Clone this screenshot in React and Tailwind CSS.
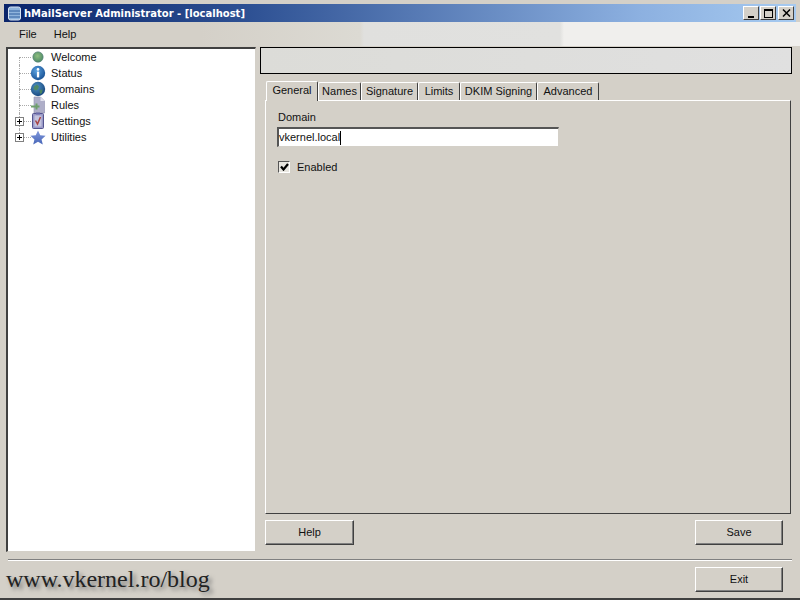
import React from "react";

const bevelBtn =
  "flex items-center justify-center h-[25px] bg-[#d4d0c8] border border-t-white border-l-white border-r-[#404040] border-b-[#404040] shadow-[inset_-1px_-1px_0_#808080] text-[11px] text-[#111]";

const Glyph = ({ name }) => {
  if (name === "welcome") {
    return (
      <svg width="16" height="16" viewBox="0 0 16 16">
        <defs>
          <radialGradient id="welcomeG" cx="0.45" cy="0.4" r="0.6">
            <stop offset="0" stopColor="#8fbf80" />
            <stop offset="1" stopColor="#4f8a68" />
          </radialGradient>
        </defs>
        <circle cx="8" cy="8" r="5.2" fill="url(#welcomeG)" stroke="#56807a" strokeWidth="0.6" />
      </svg>
    );
  }
  if (name === "status") {
    return (
      <svg width="16" height="16" viewBox="0 0 16 16">
        <defs>
          <radialGradient id="statusG" cx="0.4" cy="0.35" r="0.7">
            <stop offset="0" stopColor="#5aa2e0" />
            <stop offset="1" stopColor="#174f92" />
          </radialGradient>
        </defs>
        <circle cx="8" cy="8" r="7.2" fill="url(#statusG)" />
        <circle cx="8" cy="4.4" r="1.3" fill="#fff" />
        <rect x="6.9" y="6.6" width="2.3" height="5.8" fill="#fff" />
      </svg>
    );
  }
  if (name === "domains") {
    return (
      <svg width="16" height="16" viewBox="0 0 16 16">
        <defs>
          <radialGradient id="domainsG" cx="0.4" cy="0.35" r="0.75">
            <stop offset="0" stopColor="#4f93c4" />
            <stop offset="1" stopColor="#123f78" />
          </radialGradient>
        </defs>
        <circle cx="8" cy="8" r="7.2" fill="url(#domainsG)" />
        <path d="M4 5.5 7 3.5 9 5.5 8 8.5 5.5 9.5 3.5 8Z" fill="#4f8a68" />
        <path d="M9.5 9 12.5 8.5 12 12 10 13Z" fill="#4a8560" />
      </svg>
    );
  }
  if (name === "rules") {
    return (
      <svg width="16" height="18" viewBox="0 0 16 18">
        <path d="M4 1H10.5L14.5 5V17H4Z" fill="#aeaec8" stroke="#9090ae" strokeWidth="0.6" />
        <path d="M10.5 1V5H14.5Z" fill="#e2e2ee" />
        <path d="M5.5 7.5H7.5V9.5H9.5V11.5H7.5V13.5H5.5V11.5H1V9.5H5.5Z" fill="#6f9f6c" />
      </svg>
    );
  }
  if (name === "settings") {
    return (
      <svg width="16" height="18" viewBox="0 0 16 18">
        <rect x="2.5" y="1.5" width="11" height="15" rx="1" fill="#9a9ac8" stroke="#55558f" />
        <rect x="4.5" y="3.5" width="7" height="11" fill="#c4c4de" />
        <rect x="6" y="0.5" width="4" height="2" fill="#6a6aa8" />
        <path d="M5.5 8.5 7.5 12 10.5 5" fill="none" stroke="#a84444" strokeWidth="1.5" />
      </svg>
    );
  }
  return (
    <svg width="18" height="17" viewBox="0 0 18 17">
      <defs>
        <linearGradient id="utilG" x1="0" y1="0" x2="0" y2="1">
          <stop offset="0" stopColor="#8299dc" />
          <stop offset="1" stopColor="#4766b8" />
        </linearGradient>
      </defs>
      <path d="M9 .5 11.5 6 17.5 6.6 13 10.7 14.4 16.5 9 13.4 3.6 16.5 5 10.7 .5 6.6 6.5 6Z" fill="url(#utilG)" />
    </svg>
  );
};

const treeItems = [
  { id: "welcome", label: "Welcome" },
  { id: "status", label: "Status" },
  { id: "domains", label: "Domains" },
  { id: "rules", label: "Rules" },
  { id: "settings", label: "Settings", expand: true },
  { id: "utilities", label: "Utilities", expand: true },
];

const TreeRow = ({ item, index, last }) => (
  <div className="relative flex items-center h-4">
    {/* dotted connectors */}
    <div
      className={`absolute left-[11px] w-0 border-l border-dotted border-[#aaa] ${
        index === 0 ? "top-2 h-2" : last ? "top-0 h-2" : "top-0 h-4"
      }`}
    />
    <div className="absolute left-[11px] top-2 w-[12px] h-0 border-t border-dotted border-[#aaa]" />
    {item.expand && (
      <div className="absolute left-[7px] top-1 w-[9px] h-[9px] bg-white border border-[#808080] flex items-center justify-center">
        <div className="relative w-[5px] h-[5px]">
          <div className="absolute left-0 top-[2px] w-[5px] h-px bg-black" />
          <div className="absolute left-[2px] top-0 w-px h-[5px] bg-black" />
        </div>
      </div>
    )}
    <div className="relative ml-[22px] w-[16px] h-4 flex items-center justify-center shrink-0">
      <Glyph name={item.id} />
    </div>
    <span className="ml-[5px] text-[11px] text-[#111]">{item.label}</span>
  </div>
);

const tabs = [
  { label: "General", w: "w-[52px]", active: true },
  { label: "Names", w: "w-[43px]" },
  { label: "Signature", w: "w-[57px]" },
  { label: "Limits", w: "w-[42px]" },
  { label: "DKIM Signing", w: "w-[77px]" },
  { label: "Advanced", w: "w-[62px]" },
];

const App = () => {
  return (
    <div className="w-[800px] h-[600px] flex flex-col overflow-hidden bg-[#d4d0c8] border-b-2 border-b-[#404040] font-['Liberation_Sans',sans-serif]">
      {/* Title bar */}
      <div className="mx-[4px] mt-[4px] h-[18px] shrink-0 flex items-center pl-[3px] pr-[2px] bg-[linear-gradient(90deg,#0a246a_0%,#2c4f92_30%,#8cb0e0_80%,#a6caf0_100%)]">
        <svg width="15" height="15" viewBox="0 0 15 15">
          <rect x="1.5" y="1" width="12" height="13" rx="2" fill="#8fb4dc" stroke="#d8e4f2" />
          <path d="M2 5H13M2 8H13M2 11H13" stroke="#2e5f9e" />
        </svg>
        <span className="ml-[2px] text-[10px] font-bold text-white font-['DejaVu_Sans',sans-serif] whitespace-nowrap">
          hMailServer Administrator - [localhost]
        </span>
        <div className="ml-auto flex items-center">
          <div className="w-[16px] h-[14px] bg-[#d4d0c8] border border-t-white border-l-white border-r-[#404040] border-b-[#404040] flex items-end justify-center pb-[1px]">
            <div className="w-[6px] h-[2px] bg-black" />
          </div>
          <div className="ml-[1px] w-[16px] h-[14px] bg-[#d4d0c8] border border-t-white border-l-white border-r-[#404040] border-b-[#404040] flex items-center justify-center">
            <div className="w-[9px] h-[9px] border border-t-2 border-black" />
          </div>
          <div className="ml-[2px] w-[16px] h-[14px] bg-[#d4d0c8] border border-t-white border-l-white border-r-[#404040] border-b-[#404040] flex items-center justify-center">
            <svg width="9" height="8" viewBox="0 0 9 8">
              <path d="M1 0.5 8 7.5M8 0.5 1 7.5" stroke="#000" strokeWidth="1.5" />
            </svg>
          </div>
        </div>
      </div>

      {/* Menu */}
      <div className="h-[24px] shrink-0 flex items-center pl-[19px] gap-[17px] text-[11px] text-[#111] bg-[linear-gradient(90deg,#d4d0c8_0%,#d4d0c8_25%,#dcdad3_45%,#e0e0de_45.5%,#e1e1df_70%,#f0efed_70.5%,#f0efed_100%)]">
        <span>File</span>
        <span>Help</span>
      </div>

      {/* Body */}
      <div className="h-[506px] shrink-0 flex pl-[6px] pt-[1px]">
        {/* Tree */}
        <div className="w-[250px] h-[505px] bg-white border border-t-2 border-l-2 border-t-[#404040] border-l-[#404040] border-r-[#d4d0c8] border-b-[#d4d0c8]">
          {treeItems.map((item, i) => (
            <TreeRow key={item.id} item={item} index={i} last={i === treeItems.length - 1} />
          ))}
        </div>

        {/* Right column */}
        <div className="ml-[4px] w-[532px] flex flex-col">
          <div className="h-[27px] shrink-0 bg-gradient-to-r from-[#dcdcd8] to-[#e0e0e0] border border-black" />

          <div className="mt-[7px] ml-[5px] w-[526px] flex flex-col">
            <div className="flex items-end h-[19px] pl-[1px]">
              {tabs.map((t) => (
                <div
                  key={t.label}
                  className={`${t.w} flex items-center justify-center text-[11px] text-[#111] bg-[#d4d0c8] border-t border-l border-t-white border-l-white border-r border-r-[#404040] rounded-t-[2px] ${
                    t.active ? "h-[20px] relative z-10 -mb-px pb-[2px]" : "h-[18px]"
                  }`}
                >
                  {t.label}
                </div>
              ))}
            </div>
            <div className="h-[414px] border border-t-white border-l-white border-r-[#404040] border-b-[#404040] pl-[11px] pt-[9px]">
              <div className="text-[11px] leading-[14px] text-[#111] ml-[1px]">Domain</div>
              <div className="mt-[3px] w-[282px] h-[20px] bg-white border border-t-2 border-l-2 border-t-[#555] border-l-[#555] border-r-[#d4d0c8] border-b-[#d4d0c8] flex items-center text-[11px] text-[#111]">
                vkernel.local
                <span className="w-[1px] h-[14px] bg-black" />
              </div>
              <div className="mt-[12px] flex items-center ml-[1px]">
                <div className="w-[12px] h-[12px] bg-[#e8e6e0] border border-t-[#555] border-l-[#555] border-r-white border-b-white flex items-center justify-center">
                  <svg width="9" height="8" viewBox="0 0 9 8">
                    <path d="M1 3.5 3.5 6.5 8 1" fill="none" stroke="#000" strokeWidth="2.2" />
                  </svg>
                </div>
                <span className="ml-[7px] text-[11px] text-[#111]">Enabled</span>
              </div>
            </div>
          </div>

          <div className="mt-[6px] ml-[5px] w-[518px] flex justify-between">
            <div className={`${bevelBtn} w-[89px]`}>Help</div>
            <div className={`${bevelBtn} w-[88px]`}>Save</div>
          </div>
        </div>
      </div>

      {/* Footer */}
      <div className="mx-[8px] mt-[7px] h-[2px] shrink-0 border-t border-t-[#808080] border-b border-b-white" />
      <div className="flex-1 flex items-start justify-between pl-[6px] pr-[17px]">
        <span className="mt-[3px] text-[24px] leading-[30px] text-[#222] font-['Liberation_Serif',serif] [text-shadow:3px_3px_4px_#777]">
          www.vkernel.ro/blog
        </span>
        <div className={`${bevelBtn} w-[88px] mt-[6px]`}>Exit</div>
      </div>
    </div>
  );
};

export default App;
